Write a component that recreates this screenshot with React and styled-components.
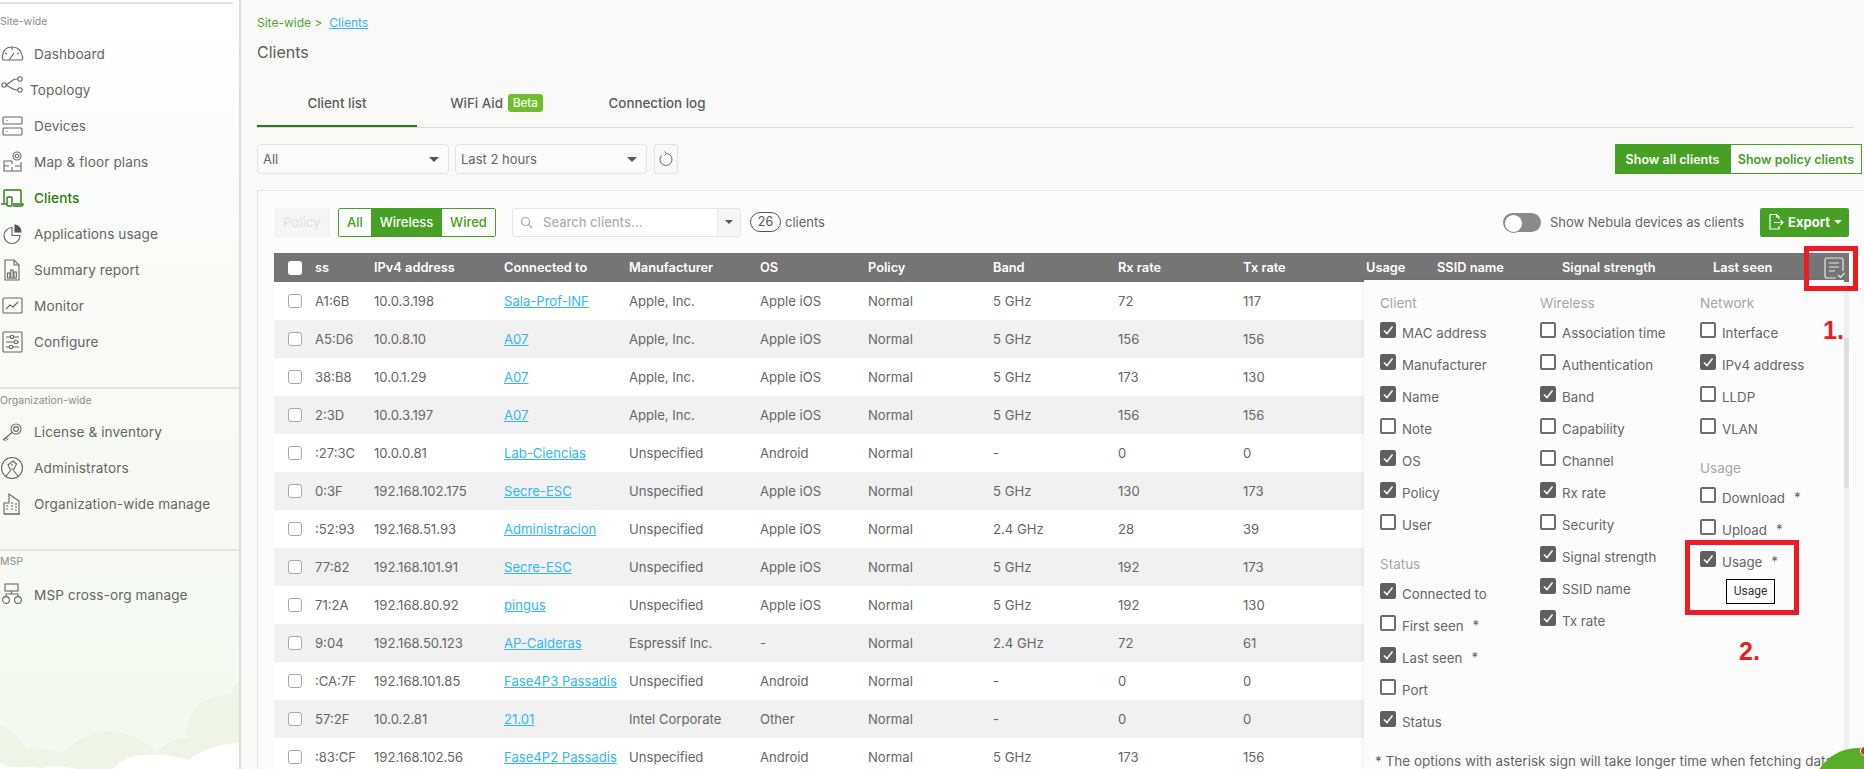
import React from "react";
import styled, { createGlobalStyle } from "styled-components";

const FONT = `Inter, "Noto Sans", "Liberation Sans", sans-serif`;
const GREEN = "#45a023";
const GRID = "41px 59px 130px 125px 131px 108px 125px 125px 125px 123px 71px 125px 151px 104px 1fr";

const Global = createGlobalStyle`
  html, body { margin: 0; padding: 0; background: #f9faf8; overflow: hidden; }
  body { font-family: ${FONT}; color: #666; }
  * { box-sizing: border-box; }
`;

const Page = styled.div`position: relative; display: flex; width: 1864px; height: 769px; overflow: hidden;`;

/* ---------- sidebar ---------- */
const Sidebar = styled.aside`
  position: relative; flex: 0 0 241px; height: 769px; padding-top: 2px;
  border-right: 2px solid #dcdcdc;
  background: linear-gradient(180deg, #ffffff 0%, #f9fbf7 35%, #f3f9ef 100%);
`;
const Rule = styled.div`height: 2px; background: #e2e2e2; margin-top: ${p => p.$top}px; margin-right: ${p => p.$right || 0}px;`;
const SectionLabel = styled.div`
  height: 20px; line-height: 20px; font-size: 10.5px; color: #8c8c8c; margin-top: ${p => p.$top}px; margin-bottom: ${p => p.$bottom}px;
`;
const NavItem = styled.div`
  display: flex; align-items: center; height: 36px; gap: ${p => (p.$tight ? 6 : 10)}px;
  font-size: 13.6px; letter-spacing: 0.1px; white-space: nowrap; color: ${p => (p.$active ? "#2a7d14" : "#666")};
  font-weight: ${p => (p.$active ? 500 : 400)};
  position: relative; z-index: 1;
  svg { flex: 0 0 24px; width: 24px; height: 24px; fill: none; stroke: currentColor; stroke-width: 1.1; margin-top: ${p => (p.$tight ? -4 : 0)}px; }
`;
const Clouds = styled.svg`position: absolute; left: 0; bottom: 0; width: 239px; height: 129px;`;

const icons = {
  dashboard: <svg viewBox="0 0 24 24"><path d="M4 18H21C23 18 23 16 22.5 15C21.5 8 17 5 12 5C7 5 3 8 2.5 14C2 16 2.5 18 4 18Z"/><path d="M9 18L14 11M12 5V8M5 11L7 12M19 11L17 12"/></svg>,
  topology: <svg viewBox="0 0 24 24"><circle cx="4" cy="9" r="2.2"/><circle cx="20" cy="3" r="2.2"/><circle cx="20" cy="14" r="2.2"/><path d="M6 9L13 4Q14.5 3 17.8 3M6 9L13 13Q14.5 14 17.8 14"/></svg>,
  devices: <svg viewBox="0 0 24 24"><rect x="3" y="3" width="19" height="7" rx="1"/><rect x="3" y="14" width="19" height="7" rx="1"/><path d="M6.5 6.5H7.5M6.5 17.5H7.5"/></svg>,
  map: <svg viewBox="0 0 24 24"><circle cx="17" cy="6" r="4"/><circle cx="17" cy="6" r="1.8"/><path d="M12 11H4V21H21V12M12 11V14M12 17V21M4 16H9M15 16H21"/></svg>,
  clients: <svg viewBox="0 0 24 24" style={{ strokeWidth: 1.4 }}><path d="M4 17V5Q4 4 5 4H20Q21 4 21 5V17"/><path d="M1 18H7M13 18H23Q23 20 21 20H13"/><rect x="7" y="11" width="5" height="9" rx="1"/></svg>,
  apps: <svg viewBox="0 0 24 24"><path d="M12 5.5A8 8 0 1 0 20 13.5H12Z"/><path d="M15 3A7 7 0 0 1 21 10H15Z" fill="#555" stroke="#555"/></svg>,
  summary: <svg viewBox="0 0 24 24"><path d="M5 2H14L19 7V22H5Z"/><path d="M14 2V7H19"/><rect x="7.5" y="15" width="2.4" height="5"/><rect x="10.7" y="12" width="2.4" height="8"/><rect x="13.9" y="14" width="2.4" height="6"/></svg>,
  monitor: <svg viewBox="0 0 24 24"><rect x="3" y="4" width="19" height="15" rx="1"/><path d="M6 15L10 11L13 13L18 8"/></svg>,
  configure: <svg viewBox="0 0 24 24"><rect x="3" y="2" width="19" height="20" rx="1"/><path d="M6 7H10M14 7H19M6 12H14M18 12H19M6 17H9M13 17H19"/><circle cx="12" cy="7" r="1.7"/><circle cx="16" cy="12" r="1.7"/><circle cx="11" cy="17" r="1.7"/></svg>,
  license: <svg viewBox="0 0 24 24"><circle cx="16" cy="9" r="5"/><circle cx="16" cy="9" r="2.4"/><path d="M12 12.5L3 20M6 17.5L8 20M4 19L5.5 21"/></svg>,
  admin: <svg viewBox="0 0 24 24"><circle cx="12" cy="12" r="10.5"/><path d="M8 9L13 5L16.5 8L14 13L10 13ZM11 9H13M11 14L6 20M13 14L18 20"/></svg>,
  org: <svg viewBox="0 0 24 24"><path d="M4 22V11H9V2L19 9V22Z"/><path d="M4 22H20M6 14H8M6 17H8M11 11H13M15 12H17M11 14H13M15 15H17M11 17H13M15 18H17"/></svg>,
  msp: <svg viewBox="0 0 24 24"><rect x="5" y="1" width="13" height="7"/><path d="M11.5 8V11M6 14V11H18V14"/><circle cx="6" cy="17" r="3.4"/><circle cx="18" cy="17" r="3.4"/></svg>,
};

/* ---------- main ---------- */
const Main = styled.main`flex: 1; min-width: 0; height: 769px; padding: 15px 0 0 16px; display: flex; flex-direction: column; background: #f9faf8;`;
const Crumbs = styled.div`height: 16px; line-height: 16px; font-size: 12px; color: #4fa532; display: flex; gap: 7px;`;
const CrumbLink = styled.a`color: #33b5ff; text-decoration: underline;`;
const Title = styled.h1`margin: 8px 0 0; height: 26px; line-height: 26px; font-size: 16px; font-weight: 400; color: #5e5e5e;`;
const Tabs = styled.div`
  display: flex; height: 48px; margin-top: 15px; margin-right: 10px; border-bottom: 1px solid #dcdcdc;
`;
const Tab = styled.div`
  width: ${p => p.$w}px; display: flex; align-items: center; justify-content: center; gap: 5px;
  height: 47px; font-size: 13.4px; font-weight: 500; color: #5c5c5c; white-space: nowrap;
  border-bottom: 2px solid ${p => (p.$active ? "#2a7d14" : "transparent")};
`;
const Beta = styled.span`background: #6fbe2e; color: #fff; font-size: 11.5px; font-weight: 500; padding: 0 5px; height: 18px; line-height: 18px; border-radius: 3px;`;
const FilterBar = styled.div`display: flex; align-items: center; height: 30px; margin-top: 16px; margin-right: 2px; gap: 6px;`;
const Select = styled.div`
  width: 192px; height: 30px; display: flex; align-items: center; justify-content: space-between;
  padding: 0 5px; background: #fbfbfb; border: 1px solid #e2e2e2; border-radius: 4px; font-size: 13px; color: #666;
`;
const Caret = styled.span`width: 0; height: 0; border-left: 5px solid transparent; border-right: 5px solid transparent; border-top: 5px solid #555; margin-right: 4px;`;
const IconBtn = styled.div`width: 24px; height: 30px; display: flex; align-items: center; justify-content: center; border: 1px solid #e2e2e2; border-radius: 2px; margin-left: 1px; color: #666;`;
const Spacer = styled.div`flex: 1;`;
const ViewGroup = styled.div`display: flex; height: 30px;`;
const ViewBtn = styled.div`
  width: ${p => p.$w}px; display: flex; align-items: center; justify-content: center; font-size: 12.5px; font-weight: 600;
  border: 1px solid ${GREEN}; background: ${p => (p.$on ? GREEN : "#fff")}; color: ${p => (p.$on ? "#fff" : GREEN)};
`;

const Card = styled.section`
  position: relative; flex: 1; margin-top: 16px; padding: 16px 16px 0 16px;
  background: #fcfcfc; border: 1px solid #e6e6e6; border-right: 0; border-bottom: 0; min-height: 0; overflow: hidden;
`;
const Toolbar = styled.div`display: flex; align-items: center; height: 30px; width: 1575px;`;
const PolicyBtn = styled.div`width: 56px; height: 29px; display: flex; align-items: center; justify-content: center; background: #f5f5f5; color: #e4e4e4; font-size: 13px; font-weight: 500; margin-right: 8px;`;
const Segments = styled.div`display: flex; height: 29px; border: 1px solid ${GREEN}; border-radius: 2px;`;
const Segment = styled.div`
  width: ${p => p.$w}px; display: flex; align-items: center; justify-content: center; font-size: 13px; font-weight: 500;
  background: ${p => (p.$on ? GREEN : "#fff")}; color: ${p => (p.$on ? "#fff" : GREEN)};
`;
const Search = styled.div`
  display: flex; align-items: center; width: 229px; height: 29px; margin-left: 16px; background: #fff;
  border: 1px solid #e4e4e4; border-radius: 3px; color: #b0b0b0; font-size: 13px; font-weight: 500;
`;
const SearchText = styled.span`flex: 1; display: flex; align-items: center; gap: 10px; padding-left: 7px;`;
const SearchCaret = styled.span`width: 23px; height: 27px; display: flex; align-items: center; justify-content: center; background: #f6f6f6; border-left: 1px solid #e8e8e8; span { margin: 0; border-width: 4px 4px 0; }`;
const Count = styled.span`margin-left: 9px; width: 31px; height: 20px; line-height: 18px; text-align: center; border: 1px solid #555; border-radius: 10px; font-size: 12.5px; color: #555;`;
const CountLabel = styled.span`margin-left: 4px; font-size: 13px; color: #666;`;
const Toggle = styled.span`
  position: relative; width: 38px; height: 19px; border-radius: 10px; background: #8a8a8a; margin-right: 9px;
  &::before { content: ""; position: absolute; left: 1px; top: 1px; width: 17px; height: 17px; border-radius: 50%; background: #fff; border: 1px solid #8a8a8a; }
`;
const ToggleText = styled.span`font-size: 13px; color: #666; white-space: nowrap; margin-right: 16px;`;
const Export = styled.div`
  width: 89px; height: 29px; display: flex; align-items: center; justify-content: center; gap: 3px;
  background: ${GREEN}; color: #fff; font-size: 13px; font-weight: 700; border-radius: 2px;
`;
const WhiteCaret = styled.span`width: 0; height: 0; border-left: 4px solid transparent; border-right: 4px solid transparent; border-top: 4px solid #fff; margin-left: 1px;`;

const Table = styled.div`width: 1575px; margin-top: 16px;`;
const HeadRow = styled.div`
  display: grid; grid-template-columns: ${GRID}; align-items: center; height: 29px;
  background: #757575; color: #fff; font-size: 12.8px; font-weight: 600; white-space: nowrap;
`;
const Row = styled.div`
  display: grid; grid-template-columns: ${GRID}; align-items: center; height: 38px;
  background: ${p => (p.$alt ? "#f1f1f1" : "#fff")}; font-size: 13.1px; color: #666; white-space: nowrap;
`;
const RowCheck = styled.span`
  display: block; width: 14px; height: 14px; margin-left: 14px; border-radius: 3px;
  background: #fff; border: ${p => (p.$head ? "0" : "1.5px solid #a8a8a8")};
`;
const Link = styled.a`color: #33b5ff; text-decoration: underline;`;
const ColIcon = styled.svg`width: 24px; height: 24px; margin-left: 5px; fill: none; stroke: #e8e8e8; stroke-width: 1.2;`;

/* ---------- column chooser ---------- */
const Chooser = styled.div`
  position: absolute; left: 1106px; top: 89px; width: 480px; bottom: 0; padding: 13px 0 0 16px;
  background: #fcfcfc; box-shadow: -2px 0 4px rgba(0,0,0,0.05); z-index: 2;
`;
const ChooserCols = styled.div`display: grid; grid-template-columns: 160px 160px 160px;`;
const Group = styled.h4`
  margin: ${p => (p.$first ? 0 : 13)}px 0 4px; height: 20px; line-height: 20px; font-size: 13.5px; font-weight: 400; color: #a6a6a6;
`;
const OptRow = styled.div`display: flex; align-items: center; gap: 6px; height: 32px; font-size: 13.3px; color: #666; white-space: nowrap;`;
const Box = styled.span`
  display: flex; align-items: center; justify-content: center; flex: 0 0 16px; width: 16px; height: 16px; margin-top: -6px; border-radius: 2px;
  background: ${p => (p.$on ? "#5f5f5f" : "#fff")}; border: 2px solid ${p => (p.$on ? "#5f5f5f" : "#6e6e6e")};
`;
const Star = styled.span`margin-left: 3px; margin-top: -3px;`;
const Footnote = styled.div`margin: 13px 0 0 -5px; height: 20px; line-height: 20px; font-size: 13.5px; color: #666; white-space: nowrap;`;
const Scrollbar = styled.div`
  position: absolute; left: 1586px; top: 91px; width: 5px; bottom: 0; background: #efefef; z-index: 2;
  &::after { content: ""; position: absolute; left: 0; right: 0; top: 56px; height: 150px; background: #dedede; }
`;

/* ---------- overlays ---------- */
const Tip = styled.div`
  position: absolute; left: 1726px; top: 579px; width: 49px; height: 25px; text-align: center; z-index: 5;
  background: #fff; border: 1px solid #000; font: 12px/23px Roboto, sans-serif; color: #333;
`;
const RedBox = styled.div`position: absolute; z-index: 6; border: 5px solid #ed1c24; left: ${p => p.$x}px; top: ${p => p.$y}px; width: ${p => p.$w}px; height: ${p => p.$h}px;`;
const Mark = styled.div`position: absolute; z-index: 6; left: ${p => p.$x}px; top: ${p => p.$y}px; color: #ed1c24; font: 700 25px/25px "Liberation Sans", sans-serif;`;
const Blob = styled.div`position: absolute; z-index: 7; left: 1812px; top: 748px; width: 92px; height: 92px; border-radius: 50%; background: #58ad2b;`;
const Badge = styled.div`position: absolute; z-index: 8; left: 1860px; top: 746px; width: 10px; height: 10px; border-radius: 50%; background: #d9262e; border: 1.5px solid #fff;`;

const Tick = () => (
  <svg width="12" height="12" viewBox="0 0 12 12" fill="none" stroke="#fff" strokeWidth="1.5"><path d="M2 6.5L5 9.5L10.5 2.5" /></svg>
);
const Opt = ({ on, star, children }) => (
  <OptRow>
    <Box $on={on}>{on && <Tick />}</Box>
    {children}
    {star && <Star>*</Star>}
  </OptRow>
);

const rows = [
  ["A1:6B", "10.0.3.198", "Sala-Prof-INF", "Apple, Inc.", "Apple iOS", "5 GHz", "72", "117"],
  ["A5:D6", "10.0.8.10", "A07", "Apple, Inc.", "Apple iOS", "5 GHz", "156", "156"],
  ["38:B8", "10.0.1.29", "A07", "Apple, Inc.", "Apple iOS", "5 GHz", "173", "130"],
  ["2:3D", "10.0.3.197", "A07", "Apple, Inc.", "Apple iOS", "5 GHz", "156", "156"],
  [":27:3C", "10.0.0.81", "Lab-Ciencias", "Unspecified", "Android", "-", "0", "0"],
  ["0:3F", "192.168.102.175", "Secre-ESC", "Unspecified", "Apple iOS", "5 GHz", "130", "173"],
  [":52:93", "192.168.51.93", "Administracion", "Unspecified", "Apple iOS", "2.4 GHz", "28", "39"],
  ["77:82", "192.168.101.91", "Secre-ESC", "Unspecified", "Apple iOS", "5 GHz", "192", "173"],
  ["71:2A", "192.168.80.92", "pingus", "Unspecified", "Apple iOS", "5 GHz", "192", "130"],
  ["9:04", "192.168.50.123", "AP-Calderas", "Espressif Inc.", "-", "2.4 GHz", "72", "61"],
  [":CA:7F", "192.168.101.85", "Fase4P3 Passadis", "Unspecified", "Android", "-", "0", "0"],
  ["57:2F", "10.0.2.81", "21.01", "Intel Corporate", "Other", "-", "0", "0"],
  [":83:CF", "192.168.102.56", "Fase4P2 Passadis", "Unspecified", "Android", "5 GHz", "173", "156"],
];

const heads = ["ss", "IPv4 address", "Connected to", "Manufacturer", "OS", "Policy", "Band", "Rx rate", "Tx rate", "Usage", "SSID name", "Signal strength", "Last seen"];

export default function App() {
  return (
    <Page>
      <Global />
      <Sidebar>
        <Rule $top={0} $right={6} />
        <SectionLabel $top={8} $bottom={4}>Site-wide</SectionLabel>
        <NavItem>{icons.dashboard}Dashboard</NavItem>
        <NavItem $tight>{icons.topology}Topology</NavItem>
        <NavItem>{icons.devices}Devices</NavItem>
        <NavItem>{icons.map}Map &amp; floor plans</NavItem>
        <NavItem $active>{icons.clients}Clients</NavItem>
        <NavItem>{icons.apps}Applications usage</NavItem>
        <NavItem>{icons.summary}Summary report</NavItem>
        <NavItem>{icons.monitor}Monitor</NavItem>
        <NavItem>{icons.configure}Configure</NavItem>
        <Rule $top={27} />
        <SectionLabel $top={2} $bottom={3}>Organization-wide</SectionLabel>
        <NavItem>{icons.license}License &amp; inventory</NavItem>
        <NavItem>{icons.admin}Administrators</NavItem>
        <NavItem>{icons.org}Organization-wide manage</NavItem>
        <Rule $top={27} />
        <SectionLabel $top={1} $bottom={5}>MSP</SectionLabel>
        <NavItem>{icons.msp}MSP cross-org manage</NavItem>
        <Clouds viewBox="0 640 239 129">
          <path fill="#eef5e6" d="M0 725C12 730 22 738 26 749C38 747 50 749 63 753C75 740 90 731 107 731C128 731 145 741 157 753C164 744 175 738 187 738C186 715 195 697 231 694C232 688 235 685 239 682V769H0Z" />
          <path fill="#ffffff" d="M0 762C6 768 14 767 24 767C34 766 42 769 48 767C58 766 70 767 78 769H113C122 760 130 755 146 755C160 754 175 756 188 760C200 752 215 744 239 743V769H0Z" />
        </Clouds>
      </Sidebar>

      <Main>
        <Crumbs>
          <span>Site-wide &gt;</span>
          <CrumbLink>Clients</CrumbLink>
        </Crumbs>
        <Title>Clients</Title>
        <Tabs>
          <Tab $w={160} $active>Client list</Tab>
          <Tab $w={159}>WiFi Aid <Beta>Beta</Beta></Tab>
          <Tab $w={162}>Connection log</Tab>
        </Tabs>
        <FilterBar>
          <Select>All<Caret /></Select>
          <Select>Last 2 hours<Caret /></Select>
          <IconBtn>
            <svg width="16" height="16" viewBox="0 0 16 16" fill="none" stroke="#666" strokeWidth="1"><path d="M8.5 2.5A6 6 0 1 1 3.5 4.5M8.5 2.5L6.5 0.5M8.5 2.5L6.5 4.5" /></svg>
          </IconBtn>
          <Spacer />
          <ViewGroup>
            <ViewBtn $w={115} $on>Show all clients</ViewBtn>
            <ViewBtn $w={132}>Show policy clients</ViewBtn>
          </ViewGroup>
        </FilterBar>
        <Card>
          <Toolbar>
            <PolicyBtn>Policy</PolicyBtn>
            <Segments>
              <Segment $w={32}>All</Segment>
              <Segment $w={71} $on>Wireless</Segment>
              <Segment $w={53}>Wired</Segment>
            </Segments>
            <Search>
              <SearchText>
                <svg width="13" height="13" viewBox="0 0 13 13" fill="none" stroke="#aaa" strokeWidth="1.2"><circle cx="5.5" cy="5.5" r="4" /><path d="M8.5 8.5L12 12" /></svg>
                Search clients...
              </SearchText>
              <SearchCaret><Caret /></SearchCaret>
            </Search>
            <Count>26</Count>
            <CountLabel>clients</CountLabel>
            <Spacer />
            <Toggle />
            <ToggleText>Show Nebula devices as clients</ToggleText>
            <Export>
              <svg width="18" height="18" viewBox="0 0 18 18" fill="none" stroke="#fff" strokeWidth="1.2"><path d="M12 6V4L9.5 1.5H3V16H12V13M9.5 1.5V4H12M7 9.5H16M13.5 7L16 9.5L13.5 12" /></svg>
              Export<WhiteCaret />
            </Export>
          </Toolbar>
          <Table>
            <HeadRow>
              <RowCheck $head />
              {heads.map(h => <span key={h}>{h}</span>)}
              <ColIcon viewBox="0 0 24 24"><path d="M14 22H5Q3 22 3 20V4Q3 2 5 2H19Q21 2 21 4V15M7 7H17M7 11H17M7 15H13M16 19L18.5 21.5L22.5 17" /></ColIcon>
            </HeadRow>
            {rows.map((r, i) => (
              <Row key={i} $alt={i % 2 === 1}>
                <RowCheck />
                <span>{r[0]}</span>
                <span>{r[1]}</span>
                <span><Link>{r[2]}</Link></span>
                <span>{r[3]}</span>
                <span>{r[4]}</span>
                <span>Normal</span>
                <span>{r[5]}</span>
                <span>{r[6]}</span>
                <span>{r[7]}</span>
              </Row>
            ))}
          </Table>
          <Chooser>
            <ChooserCols>
              <div>
                <Group $first>Client</Group>
                <Opt on>MAC address</Opt>
                <Opt on>Manufacturer</Opt>
                <Opt on>Name</Opt>
                <Opt>Note</Opt>
                <Opt on>OS</Opt>
                <Opt on>Policy</Opt>
                <Opt>User</Opt>
                <Group>Status</Group>
                <Opt on>Connected to</Opt>
                <Opt star>First seen</Opt>
                <Opt on star>Last seen</Opt>
                <Opt>Port</Opt>
                <Opt on>Status</Opt>
              </div>
              <div>
                <Group $first>Wireless</Group>
                <Opt>Association time</Opt>
                <Opt>Authentication</Opt>
                <Opt on>Band</Opt>
                <Opt>Capability</Opt>
                <Opt>Channel</Opt>
                <Opt on>Rx rate</Opt>
                <Opt>Security</Opt>
                <Opt on>Signal strength</Opt>
                <Opt on>SSID name</Opt>
                <Opt on>Tx rate</Opt>
              </div>
              <div>
                <Group $first>Network</Group>
                <Opt>Interface</Opt>
                <Opt on>IPv4 address</Opt>
                <Opt>LLDP</Opt>
                <Opt>VLAN</Opt>
                <Group>Usage</Group>
                <Opt star>Download</Opt>
                <Opt star>Upload</Opt>
                <Opt on star>Usage</Opt>
              </div>
            </ChooserCols>
            <Footnote>* The options with asterisk sign will take longer time when fetching data</Footnote>
          </Chooser>
          <Scrollbar />
        </Card>
      </Main>

      <Tip>Usage</Tip>
      <RedBox $x={1804} $y={246} $w={54} $h={45} />
      <RedBox $x={1685} $y={540} $w={114} $h={75} />
      <Mark $x={1823} $y={318}>1.</Mark>
      <Mark $x={1739} $y={639}>2.</Mark>
      <Blob />
      <Badge />
    </Page>
  );
}
